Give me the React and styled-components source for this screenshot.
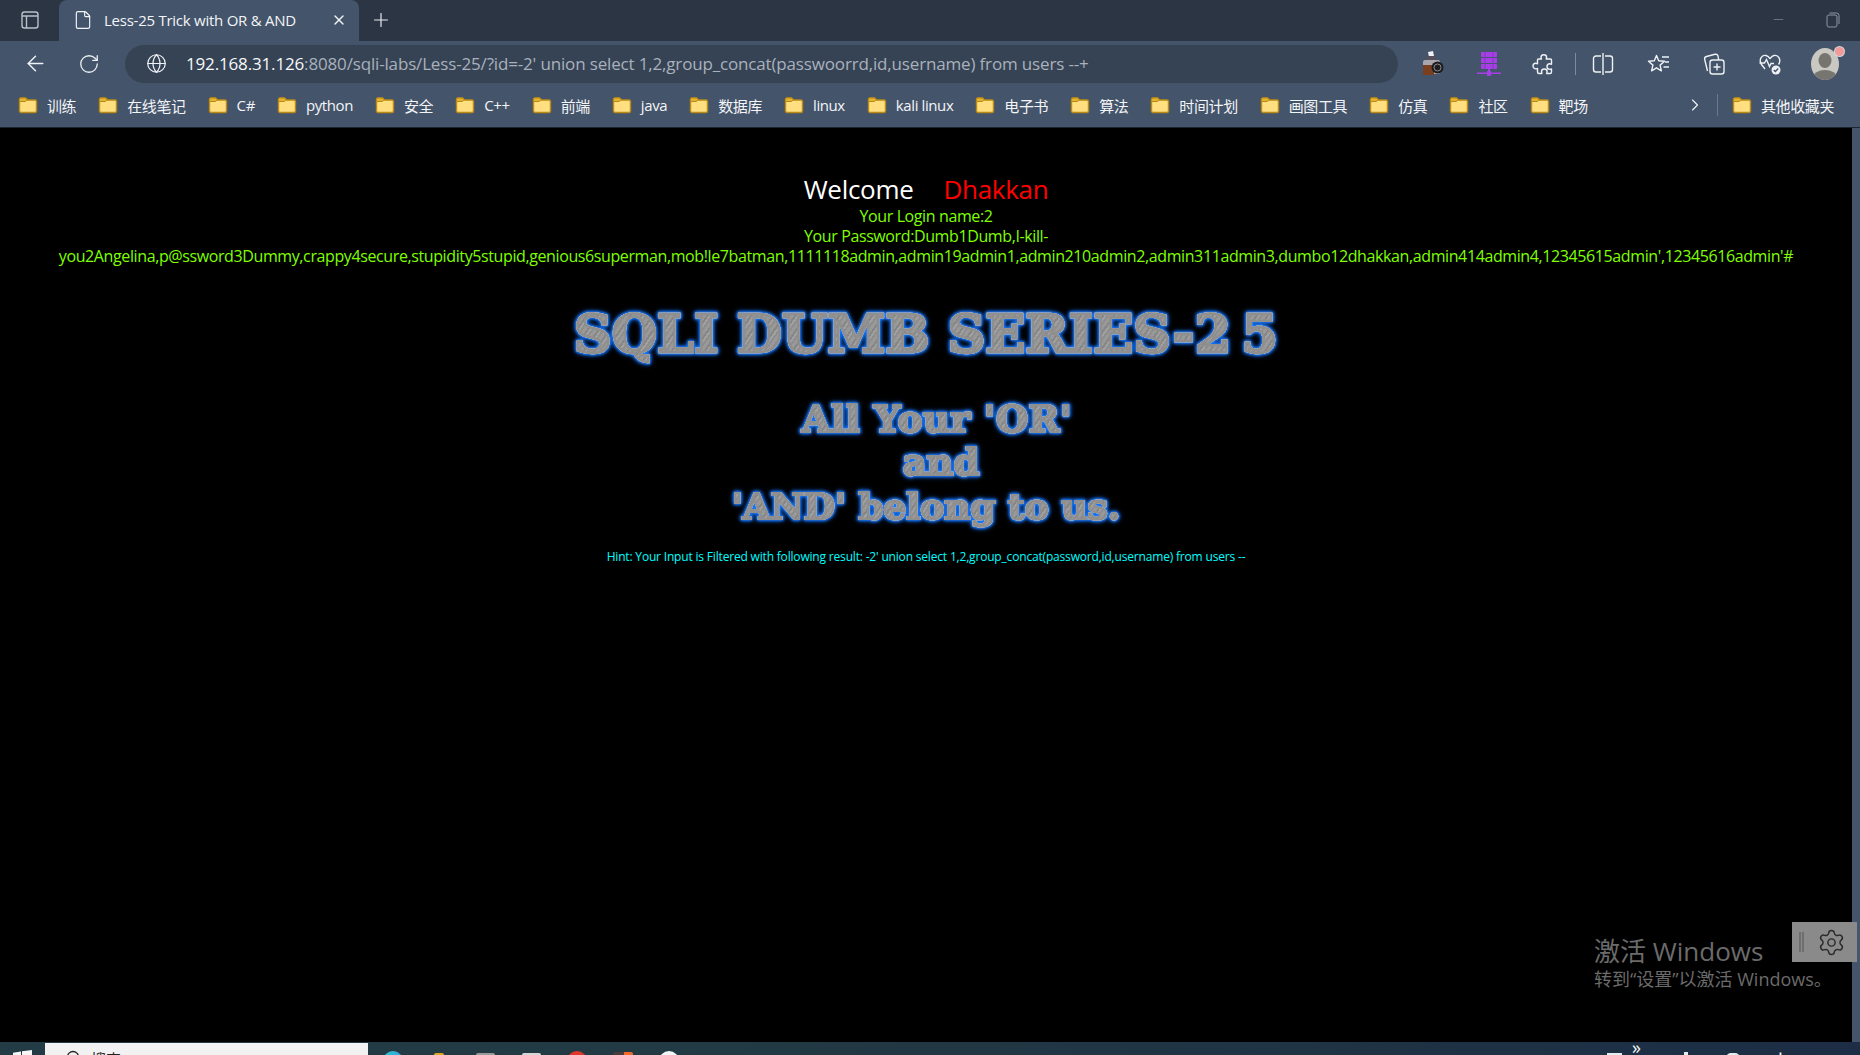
import React from 'react'
import styled, { createGlobalStyle } from 'styled-components'
import { ArrowLeft, RotateCw, Globe, File, X, Plus, Minus, ChevronRight, Settings } from 'lucide-react'

const UI_FONT = `"Open Sans", "Noto Sans CJK SC", sans-serif`

const BOOKMARKS = ['训练', '在线笔记', 'C#', 'python', '安全', 'C++', '前端', 'java', '数据库', 'linux', 'kali linux', '电子书', '算法', '时间计划', '画图工具', '仿真', '社区', '靶场']

const TASKBAR_APPS = [
  { width: 20, top: 9, round: true, color: 'linear-gradient(90deg,#2ac7c9,#3aa0e6)' },
  { width: 10, top: 11, color: '#e0a820' },
  { width: 19, top: 11, color: '#9a9a9a' },
  { width: 19, top: 11, color: '#d6d6d6' },
  { width: 20, top: 9, round: true, color: '#e0392b' },
  { width: 20, top: 10, color: 'linear-gradient(90deg,#4a3c3a 55%,#f06a2a 55%)' },
  { width: 20, top: 9, round: true, color: '#f5f5f5' },
]

const PASSWORD_TAIL =
  "you2Angelina,p@ssword3Dummy,crappy4secure,stupidity5stupid,genious6superman,mob!le7batman,1111118admin,admin19admin1,admin210admin2,admin311admin3,dumbo12dhakkan,admin414admin4,12345615admin',12345616admin'#"

const GlobalStyle = createGlobalStyle`
  html, body {
    margin: 0;
    padding: 0;
    height: 100%;
    overflow: hidden;
    background: #000;
  }
  * {
    box-sizing: border-box;
  }
`

/*---> Browser chrome <---*/
const Screen = styled.div`
  position: relative;
  width: 1860px;
  height: 1055px;
  display: flex;
  flex-direction: column;
  overflow: hidden;
  font-family: ${UI_FONT};
`

const TabStrip = styled.div`
  height: 41px;
  flex: none;
  display: flex;
  align-items: stretch;
  background: #2b3543;
  color: #e8ecf1;
`

const SideButton = styled.div`
  width: 59px;
  padding-bottom: 2px;
  display: flex;
  align-items: center;
  justify-content: center;
`

const Tab = styled.div`
  width: 300px;
  display: flex;
  align-items: center;
  gap: 11px;
  padding: 0 12px 2px 14px;
  background: #44546a;
  border-radius: 8px 8px 0 0;
  font-size: 15px;
  letter-spacing: -0.25px;
  color: #f2f4f7;
`

const TabTitle = styled.span`
  flex: 1;
  white-space: nowrap;
`

const NewTab = styled.div`
  width: 44px;
  padding-bottom: 2px;
  display: flex;
  align-items: center;
  justify-content: center;
`

const WindowControls = styled.div`
  margin-left: auto;
  display: flex;
  align-items: center;
  gap: 40px;
  padding: 0 20px 2px 0;
  color: #8c97a6;
`

const Toolbar = styled.div`
  height: 45px;
  flex: none;
  display: flex;
  align-items: center;
  padding-left: 15px;
  background: #44546a;
  color: #eef1f5;
`

const NavButton = styled.div`
  width: 40px;
  height: 40px;
  margin-right: 14px;
  display: flex;
  align-items: center;
  justify-content: center;
`

const AddressBar = styled.div`
  width: 1273px;
  height: 38px;
  flex: none;
  display: flex;
  align-items: center;
  gap: 19px;
  padding-left: 21px;
  margin-left: 2px;
  border-radius: 19px;
  background: #364354;
`

const Url = styled.div`
  font-size: 17px;
  letter-spacing: -0.16px;
  white-space: nowrap;
  color: #a9b1bc;
`

const Host = styled.span`
  color: #f6f8fa;
`

const ToolIcons = styled.div`
  display: flex;
  align-items: center;
  gap: 23.5px;
  margin-left: 19px;
`

const ToolIcon = styled.div`
  position: relative;
  width: 32px;
  height: 32px;
  display: flex;
  align-items: center;
  justify-content: center;
`

const ToolDivider = styled.div`
  width: 1px;
  height: 22px;
  margin: 0 -12px 0 -9px;
  background: #7f8b9b;
`

const Avatar = styled.div`
  width: 28px;
  height: 32px;
  border-radius: 50%;
  overflow: hidden;
  background: #c9c8c2;
`

const AvatarBadge = styled.span`
  position: absolute;
  top: -1px;
  right: -3px;
  width: 9px;
  height: 9px;
  border-radius: 50%;
  background: #f09a9a;
  box-shadow: 0 0 0 1px #d8d8d8;
`

const BookmarkBar = styled.div`
  height: 42px;
  flex: none;
  display: flex;
  align-items: center;
  padding: 0 26px 3px 18px;
  background: #44546a;
  border-bottom: 1px solid #1e2530;
  color: #f3f5f8;
  font-size: 15px;
  letter-spacing: -0.4px;
`

const BookmarkList = styled.div`
  flex: 1;
  display: flex;
  align-items: center;
  gap: 22px;
`

const Bookmark = styled.div`
  display: flex;
  align-items: center;
  gap: 9px;
  white-space: nowrap;
`

const OverflowButton = styled.div`
  display: flex;
  align-items: center;
  padding-right: 12px;
  border-right: 1px solid #6b7888;
  margin-right: 14px;
  height: 22px;
`

/*---> Page <---*/
const Viewport = styled.div`
  flex: 1;
  min-height: 0;
  display: flex;
`

const Page = styled.main`
  flex: 1;
  min-width: 0;
  padding-top: 45px;
  background: #000;
  text-align: center;
  font-size: 16px;
  line-height: 20px;
  letter-spacing: -0.39px;
  color: #7fff00;
`

const Scrollbar = styled.div`
  width: 8px;
  flex: none;
  background: #44546a;
`

const Welcome = styled.div`
  font-size: 26px;
  line-height: 33px;
  letter-spacing: -0.3px;
  color: #fff;
`

const Visitor = styled.span`
  margin-left: 30px;
  color: #f00;
`

const LongLine = styled.div`
  white-space: nowrap;
`

const Headline = styled.div`
  margin-top: ${(p) => p.$top || 0}px;
  transform: translateX(${(p) => p.$shift || 0}px);
  width: max-content;
  margin-left: auto;
  margin-right: auto;
  font-family: "DejaVu Serif", "Liberation Serif", serif;
  font-weight: 700;
  font-size: ${(p) => p.$size}px;
  line-height: ${(p) => p.$line}px;
  letter-spacing: ${(p) => p.$spacing || 0}px;
  white-space: pre;
  color: transparent;
  -webkit-text-stroke: ${(p) => p.$stroke}px #8f8f8f;
  background: repeating-linear-gradient(125deg, #a0a0a0 0 2px, #8e8e8e 2px 4px, #999 4px 7px, #868686 7px 9px);
  -webkit-background-clip: text;
  background-clip: text;
  filter: drop-shadow(0 0 0.5px #e6eeff) drop-shadow(0 0 1.2px #1a7cff) drop-shadow(0 0 1.5px #1a7cff) drop-shadow(0 0 2px #0f55c0);
`

const Hint = styled.div`
  margin-top: 21px;
  font-size: 12px;
  line-height: 16px;
  letter-spacing: -0.18px;
  color: #0ff;
`

/*---> Overlays <---*/
const Watermark = styled.div`
  position: absolute;
  left: 1594px;
  top: 935px;
  color: #6b6b6b;
  white-space: nowrap;
`

const WatermarkTitle = styled.div`
  font-size: 26px;
  line-height: 32px;
`

const WatermarkText = styled.div`
  font-size: 18px;
  line-height: 24px;
`

const SettingsWidget = styled.div`
  position: absolute;
  left: 1792px;
  top: 922px;
  width: 65px;
  height: 40px;
  display: flex;
  align-items: center;
  gap: 13px;
  padding-left: 7px;
  background: #8a8a8a;
  color: #2a2a2a;
`

const Grip = styled.span`
  width: 5px;
  height: 20px;
  border-left: 2px solid #6e6e6e;
  border-right: 2px solid #6e6e6e;
`

/*---> Taskbar, cut by the bottom of the picture <---*/
const Taskbar = styled.div`
  height: 13px;
  flex: none;
  display: flex;
  overflow: hidden;
  align-items: flex-start;
  background: linear-gradient(90deg, #223b44 0%, #223a44 40%, #1c2d45 100%);
`

const StartButton = styled.div`
  width: 45px;
  padding: 8px 0 0 13px;
  flex: none;
`

const SearchBox = styled.div`
  width: 323px;
  height: 40px;
  flex: none;
  display: flex;
  gap: 8px;
  padding: 6px 0 0 20px;
  margin-top: 1px;
  background: #f2f2f2;
  color: #222;
  font-size: 15px;
  line-height: 20px;
`

const Apps = styled.div`
  display: flex;
  padding-left: 2px;
`

const AppSlot = styled.div`
  width: 46px;
  display: flex;
  justify-content: center;
  flex: none;
`

const AppIcon = styled.span`
  width: ${(p) => p.$width}px;
  height: 20px;
  margin-top: ${(p) => p.$top}px;
  border-radius: ${(p) => (p.$round ? '50%' : '2px')};
  background: ${(p) => p.$color};
`

const Tray = styled.div`
  margin-left: auto;
  display: flex;
  align-items: flex-start;
  padding-right: 69px;
  color: #f4f4f4;
`

const TrayBox = styled.span`
  width: 15px;
  height: 14px;
  margin: 11px 10px 0 9px;
  background: #e8ebee;
`

const TrayArrows = styled.span`
  width: 10px;
  margin-right: 42px;
  font-size: 18px;
  line-height: 11px;
`

const TrayDot = styled.span`
  width: 4px;
  height: 4px;
  margin: ${(p) => p.$top}px ${(p) => p.$right}px 0 0;
  background: #e8ebee;
`

const TrayBlob = styled.span`
  width: 14px;
  height: 10px;
  margin: 11px 30px 0 0;
  border-radius: 5px;
  background: #e8ebee;
`

const TrayIme = styled.span`
  font-size: 21px;
  line-height: 26px;
  margin-top: 7px;
`

/*---> Icons <---*/
const Folder = () => (
  <svg width="20" height="20" viewBox="0 0 20 20">
    <path d="M1.500 4.500a1.500 1.500 0 0 1 1.500-1.500h4.500l2 2h7.500a1.500 1.500 0 0 1 1.500 1.500v9.500a1.500 1.500 0 0 1-1.500 1.500H3a1.500 1.500 0 0 1-1.500-1.500z" fill="#ffdf80" stroke="#b98a16" strokeWidth="1.400" />
    <path d="M1.500 6.500V4.500A1.500 1.500 0 0 1 3 3h4.500l1.600 1.700L7.500 6.500z" fill="#e4b32f" stroke="#b98a16" strokeWidth="1" />
  </svg>
)

const SidebarIcon = () => (
  <svg width="20" height="20" viewBox="0 0 20 20" fill="none" stroke="#b9c0ca" strokeWidth="1.400">
    <rect x="2" y="2" width="16" height="16" rx="2.500" />
    <path d="M2 6h16M6.500 6v12" />
  </svg>
)

const RestoreIcon = () => (
  <svg width="14" height="16" viewBox="0 0 14 16" fill="none" stroke="#8c97a6" strokeWidth="1">
    <rect x="1" y="3" width="10" height="12" rx="2" />
    <path d="M3.500 1h7a2.500 2.500 0 0 1 2.500 2.500V12" />
  </svg>
)

const CameraIcon = () => (
  <svg width="24" height="26" viewBox="0 0 24 26">
    <path d="M7 1l5-1 1 5-5 1z" fill="#eef0f6" />
    <rect x="6" y="5" width="8" height="4" fill="#55505c" />
    <rect x="2" y="9" width="17" height="14" rx="2" fill="#a9a6ae" />
    <rect x="2" y="14" width="11" height="10" fill="#7a3f1e" />
    <circle cx="16.500" cy="16.500" r="6" fill="#1d1d1f" />
    <circle cx="16.500" cy="16.500" r="3.500" fill="none" stroke="#8a8a8a" strokeWidth="1" />
  </svg>
)

const ServerIcon = () => (
  <svg width="24" height="26" viewBox="0 0 24 26">
    <g fill="#a83ee8">
      <rect x="4" y="1" width="16" height="5" rx="1" />
      <rect x="4" y="7" width="16" height="5" rx="1" />
      <rect x="4" y="13" width="16" height="5" rx="1" />
      <rect x="11" y="18" width="2" height="4" />
      <rect x="0" y="21.500" width="24" height="1.500" />
      <rect x="10" y="20" width="4" height="5" />
    </g>
    <path d="M8 1v17M16 1v17" stroke="#7b3bb0" strokeWidth="1" />
  </svg>
)

const PuzzleIcon = () => (
  <svg width="24" height="24" viewBox="0 0 24 24" fill="none" stroke="#eef1f5" strokeWidth="1.400" strokeLinejoin="round">
    <path d="M9 5.500a2.800 2.800 0 0 1 5.600 0c0 .7-.4 1-.4 1.500h4.300a1 1 0 0 1 1 1v4.200c-.5 0-.9-.4-1.700-.4a2.800 2.800 0 0 0 0 5.600c.8 0 1.200-.4 1.700-.4V20a1.500 1.500 0 0 1-1.500 1.500h-3.300c0-.5.400-.9.400-1.700a2.800 2.800 0 0 0-5.600 0c0 .8.400 1.200.4 1.700H7a1.500 1.500 0 0 1-1.500-1.500v-3.500c-.5 0-.9.400-1.700.4a2.800 2.800 0 0 1 0-5.600c.8 0 1.200.4 1.700.4V8a1 1 0 0 1 1-1h3c0-.5-.5-.8-.5-1.500z" />
  </svg>
)

const SplitIcon = () => (
  <svg width="22" height="24" viewBox="0 0 22 24" fill="none" stroke="#eef1f5" strokeWidth="1.400">
    <path d="M9 4H4a2.500 2.500 0 0 0-2.500 2.500v11A2.500 2.500 0 0 0 4 20h5M13 4h5a2.500 2.500 0 0 1 2.500 2.500v11A2.500 2.500 0 0 1 18 20h-5M11 1v22" />
  </svg>
)

const FavouritesIcon = () => (
  <svg width="24" height="24" viewBox="0 0 24 24" fill="none" stroke="#eef1f5" strokeWidth="1.400" strokeLinejoin="round">
    <path d="M9.500 3.500l2.200 5.300 5.800.5-4.400 3.800 1.300 5.700-4.900-3-4.900 3 1.300-5.700L1.500 9.300l5.800-.5z" />
    <path d="M15 5h7M18 10h4M16.500 15H22" />
  </svg>
)

const CollectionsIcon = () => (
  <svg width="24" height="24" viewBox="0 0 24 24" fill="none" stroke="#eef1f5" strokeWidth="1.400">
    <rect x="8" y="8" width="14" height="14" rx="2.500" />
    <path d="M15 11.500v7M11.500 15h7" />
    <path d="M5.500 19L2.700 7.500a2.500 2.500 0 0 1 1.800-3L13 2.300a2.500 2.500 0 0 1 3 1.700l.7 4" />
  </svg>
)

const HealthIcon = () => (
  <svg width="24" height="24" viewBox="0 0 24 24" fill="none" stroke="#eef1f5" strokeWidth="1.400">
    <path d="M7 17l-3.500-4.500C.5 8 3.500 2.500 8 3.500c2 .4 3 1.800 4 3 1-1.200 2-2.600 4-3 4.500-1 7.500 4.500 4.500 9" />
    <path d="M1.500 11h5l2-3.500 3 7 1.500-3h3" />
    <circle cx="18" cy="18" r="4.500" fill="#eef1f5" stroke="none" />
    <path d="M15.800 18l1.600 1.600 2.800-3" stroke="#44546a" />
  </svg>
)

const AvatarFigure = () => (
  <svg width="28" height="32" viewBox="0 0 28 32">
    <ellipse cx="14" cy="12.500" rx="6.500" ry="7.500" fill="#767570" />
    <ellipse cx="14" cy="30" rx="12" ry="8" fill="#767570" />
  </svg>
)

const WindowsLogo = () => (
  <svg width="19" height="19" viewBox="0 0 19 19" fill="#f6f6f6">
    <path d="M0 2.700L8 1.500v7.500H0zM9 1.300L19 0v9H9zM0 10h8v7.500L0 16.300zM9 10h10v9L9 17.700z" />
  </svg>
)

/*---> Component <---*/
function App() {
  return (
    <Screen>
      <GlobalStyle />
      <TabStrip>
        <SideButton>
          <SidebarIcon />
        </SideButton>
        <Tab>
          <File size={20} strokeWidth={1.400} />
          <TabTitle>Less-25 Trick with OR &amp; AND</TabTitle>
          <X size={16} strokeWidth={2} />
        </Tab>
        <NewTab>
          <Plus size={22} strokeWidth={1.300} />
        </NewTab>
        <WindowControls>
          <Minus size={15} strokeWidth={1} />
          <RestoreIcon />
        </WindowControls>
      </TabStrip>

      <Toolbar>
        <NavButton>
          <ArrowLeft size={25} strokeWidth={1.400} />
        </NavButton>
        <NavButton>
          <RotateCw size={22} strokeWidth={1.400} />
        </NavButton>
        <AddressBar>
          <Globe size={21} strokeWidth={1.400} />
          <Url>
            <Host>192.168.31.126</Host>:8080/sqli-labs/Less-25/?id=-2' union select 1,2,group_concat(passwoorrd,id,username) from users --+
          </Url>
        </AddressBar>
        <ToolIcons>
          <ToolIcon><CameraIcon /></ToolIcon>
          <ToolIcon><ServerIcon /></ToolIcon>
          <ToolIcon><PuzzleIcon /></ToolIcon>
          <ToolDivider />
          <ToolIcon><SplitIcon /></ToolIcon>
          <ToolIcon><FavouritesIcon /></ToolIcon>
          <ToolIcon><CollectionsIcon /></ToolIcon>
          <ToolIcon><HealthIcon /></ToolIcon>
          <ToolIcon>
            <Avatar><AvatarFigure /></Avatar>
            <AvatarBadge />
          </ToolIcon>
        </ToolIcons>
      </Toolbar>

      <BookmarkBar>
        <BookmarkList>
          {BOOKMARKS.map((name) => (
            <Bookmark key={name}>
              <Folder />
              {name}
            </Bookmark>
          ))}
        </BookmarkList>
        <OverflowButton>
          <ChevronRight size={20} strokeWidth={1.300} />
        </OverflowButton>
        <Bookmark>
          <Folder />
          其他收藏夹
        </Bookmark>
      </BookmarkBar>

      <Viewport>
        <Page>
          <Welcome>
            Welcome<Visitor>Dhakkan</Visitor>
          </Welcome>
          <div>Your Login name:2</div>
          <div>Your Password:Dumb1Dumb,I-kill-</div>
          <LongLine>{PASSWORD_TAIL}</LongLine>
          <Headline $top={38} $size={52} $line={60} $spacing={0.2} $stroke={2.500}>SQLI DUMB SERIES-2{'\u2009'}5</Headline>
          <Headline $top={34} $size={37} $line={43} $shift={11} $spacing={0.6} $stroke={2}>All Your 'OR'</Headline>
          <Headline $size={37} $line={43} $shift={15} $stroke={2}>and</Headline>
          <Headline $top={1} $size={36} $line={43} $stroke={2}>'AND' belong to us.</Headline>
          <Hint>Hint: Your Input is Filtered with following result: -2' union select 1,2,group_concat(password,id,username) from users --</Hint>
        </Page>
        <Scrollbar />
      </Viewport>

      <Taskbar>
        <StartButton><WindowsLogo /></StartButton>
        <SearchBox>
          <svg width="18" height="18" viewBox="0 0 18 18" fill="none" stroke="#222" strokeWidth="1.300">
            <circle cx="8" cy="8" r="5.500" />
            <path d="M12 12l5 5" />
          </svg>
          搜索
        </SearchBox>
        <Apps>
          {TASKBAR_APPS.map((app, i) => (
            <AppSlot key={i}>
              <AppIcon $width={app.width} $top={app.top} $round={app.round} $color={app.color} />
            </AppSlot>
          ))}
        </Apps>
        <Tray>
          <TrayBox />
          <TrayArrows>»</TrayArrows>
          <TrayDot $top={10} $right={38} />
          <TrayBlob />
          <TrayIme>中</TrayIme>
        </Tray>
      </Taskbar>

      <Watermark>
        <WatermarkTitle>激活 Windows</WatermarkTitle>
        <WatermarkText>转到“设置”以激活 Windows。</WatermarkText>
      </Watermark>
      <SettingsWidget>
        <Grip />
        <Settings size={29} strokeWidth={1.200} />
      </SettingsWidget>
    </Screen>
  )
}

export default App
